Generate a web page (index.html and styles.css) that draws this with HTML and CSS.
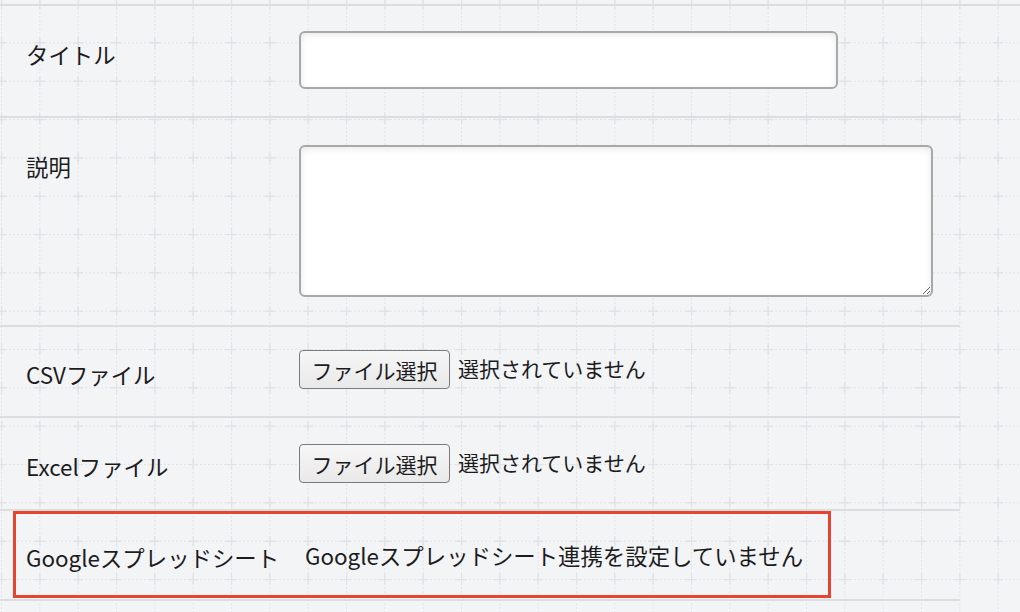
FILE: index.html
```html
<!DOCTYPE html>
<html lang="ja">
<head>
<meta charset="utf-8">
<title>フォーム</title>
<link rel="stylesheet" href="styles.css">
</head>
<body>
<div class="page">
  <div class="form">
    <div class="row row-title">
      <div class="label">タイトル</div>
      <div class="control"><input class="text-input" type="text"></div>
    </div>
    <div class="row row-desc">
      <div class="label">説明</div>
      <div class="control"><textarea class="text-area"></textarea></div>
    </div>
    <div class="row row-file row-csv">
      <div class="label">CSVファイル</div>
      <div class="control file-control">
        <button class="file-btn" type="button">ファイル選択</button>
        <span class="file-status">選択されていません</span>
      </div>
    </div>
    <div class="row row-file row-excel">
      <div class="label">Excelファイル</div>
      <div class="control file-control">
        <button class="file-btn" type="button">ファイル選択</button>
        <span class="file-status">選択されていません</span>
      </div>
    </div>
    <div class="row row-google">
      <div class="label">Googleスプレッドシート</div>
      <div class="control google-status">Googleスプレッドシート連携を設定していません</div>
      <div class="highlight"></div>
    </div>
  </div>
</div>
</body>
</html>
```

FILE: styles.css
```css
html, body {
  margin: 0;
  padding: 0;
}

body {
  background-color: #f3f4f6;
  background-image: url("data:image/svg+xml,%3Csvg xmlns='http://www.w3.org/2000/svg' width='115' height='115' viewBox='0 0 115 115'%3E%3Cg stroke='%23e3e4e7' stroke-width='1' stroke-dasharray='2 2' fill='none'%3E%3Cpath d='M0.5 0V115M38.83 0V115M77.17 0V115'/%3E%3Cpath d='M0 0.5H115M0 38.83H115M0 77.17H115'/%3E%3C/g%3E%3Cg stroke='%23e2e3e6' stroke-width='1.5' fill='none'%3E%3Cpath d='M0.5 -5V5M0.5 33.8V43.8M0.5 72.2V82.2M0.5 110V120M38.83 -5V5M38.83 33.8V43.8M38.83 72.2V82.2M38.83 110V120M77.17 -5V5M77.17 33.8V43.8M77.17 72.2V82.2M77.17 110V120'/%3E%3Cpath d='M-5 0.5H5M33.8 0.5H43.8M72.2 0.5H82.2M110 0.5H120M-5 38.83H5M33.8 38.83H43.8M72.2 38.83H82.2M110 38.83H120M-5 77.17H5M33.8 77.17H43.8M72.2 77.17H82.2M110 77.17H120'/%3E%3C/g%3E%3C/svg%3E");
  background-size: 115px 115px;
  background-position: 1.2px 4.2px;
  font-family: "Noto Sans CJK JP", "Noto Sans", sans-serif;
  font-size: 21px;
  color: #1c1c1e;
  min-height: 612px;
}

.page {
  padding-top: 4px;
}

.form {
  border-top: 2px solid #dcdddf;
}

.row {
  width: 960px;
  display: flex;
  align-items: flex-start;
  border-bottom: 2px solid #dcdddf;
  position: relative;
  box-sizing: border-box;
}

.label {
  flex: none;
  width: 299px;
  padding-left: 26px;
  box-sizing: border-box;
  font-size: 22.4px;
  line-height: 30px;
  white-space: nowrap;
}

.control {
  flex: none;
}

/* Title row */
.row-title {
  padding: 25px 0 27px;
}
.row-title .label {
  margin-top: 8px;
}
.text-input {
  display: block;
  width: 539px;
  height: 58px;
  box-sizing: border-box;
  margin: 0;
  border: 2px solid #a8a8a8;
  border-radius: 6px;
  background: #ffffff;
  box-shadow: inset 0 2px 7px rgba(0, 0, 0, 0.09);
  outline: none;
  font: inherit;
}

/* Description row */
.row-desc {
  padding: 27px 0 28px;
}
.row-desc .label {
  margin-top: 6px;
}
.text-area {
  display: block;
  width: 634px;
  height: 152px;
  box-sizing: border-box;
  margin: 0;
  border: 2px solid #a8a8a8;
  border-radius: 6px;
  background: #ffffff;
  box-shadow: inset 0 2px 7px rgba(0, 0, 0, 0.09);
  outline: none;
  resize: both;
  font: inherit;
}

/* File rows */
.row-csv {
  padding: 23px 0 27px;
}
.row-csv .label {
  margin-top: 9px;
}
.row-excel {
  padding: 26px 0 26px;
}
.row-excel .label {
  margin-top: 7px;
}
.file-control {
  display: flex;
  align-items: center;
  gap: 8px;
}
.file-btn {
  height: 39px;
  width: 151px;
  box-sizing: border-box;
  margin: 0;
  padding: 0 11px;
  border: 1px solid #7a7a7a;
  border-radius: 4px;
  background: linear-gradient(#f6f6f6, #e9e9e9);
  color: #1c1c1e;
  font-family: inherit;
  font-size: 21px;
  line-height: 30px;
  white-space: nowrap;
}
.file-status {
  line-height: 30px;
  white-space: nowrap;
  margin-top: -3px;
}

/* Google row */
.row-google {
  padding: 31px 0 27px;
}
.google-status {
  padding-left: 6px;
  font-size: 22.4px;
  line-height: 30px;
  white-space: nowrap;
  margin-top: -2px;
}
.highlight {
  position: absolute;
  left: 13px;
  top: 0;
  width: 818px;
  height: 87px;
  box-sizing: border-box;
  border: 3px solid #e8432e;
  pointer-events: none;
}
```
